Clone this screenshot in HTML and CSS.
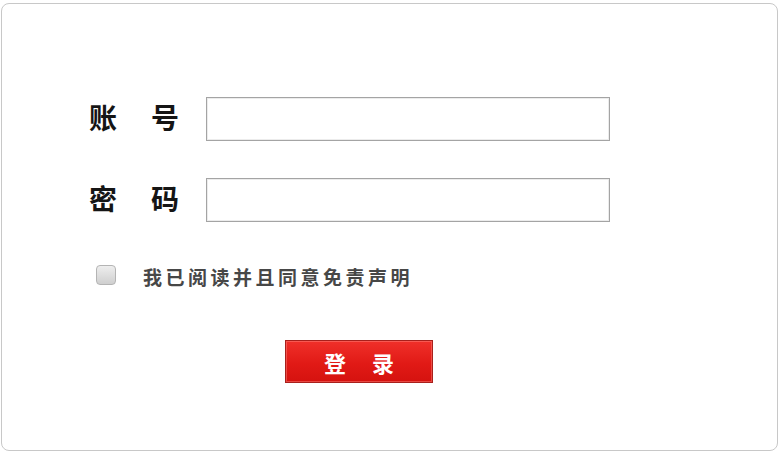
FILE: index.html
```html
<!DOCTYPE html>
<html lang="zh-CN">

<head>
  <meta charset="UTF-8">
  <meta name="viewport" content="width=device-width, initial-scale=1.0">
  <title>登录</title>

  <link rel="stylesheet" href="styles.css">
</head>

<body>

  <div id="panel">

    <div class="row">
      <p class="label"><span>账</span><span>号</span></p>
      <input type="text" class="field">
    </div>

    <div class="row">
      <p class="label"><span>密</span><span>码</span></p>
      <input type="password" class="field">
    </div>

    <div id="agree">
      <input type="checkbox" id="check">
      <label for="check">我已阅读并且同意免责声明</label>
    </div>

    <div id="operation">
      <input type="button" id="login" value="登录">
    </div>

  </div>

</body>

</html>
```

FILE: styles.css
```css
body {
  margin: 0;
  background-color: #ffffff;
  font-family: "Noto Sans CJK SC", "Noto Sans", sans-serif;
}

#panel {
  box-sizing: border-box;
  width: 777px;
  height: 448px;
  margin: 3px 0 0 1px;
  padding: 93px 0 0 87px;
  border: 1px solid #c8c8c8;
  border-radius: 8px;
}

.row {
  display: flex;
  align-items: center;
  height: 44px;
  margin-bottom: 37px;
}

.label {
  display: flex;
  justify-content: space-between;
  width: 90px;
  margin: -4px 27px 0 0;
  font-size: 28px;
  font-weight: bold;
  line-height: 1;
  color: #151515;
}

.field {
  box-sizing: border-box;
  width: 404px;
  height: 44px;
  margin: 0;
  border: 1px solid #a4a4a4;
  box-shadow: inset 0 0 0 1px #ececec;
  background-color: #ffffff;
  outline: none;
}

/* margin-top collapses with the row above */
#agree {
  display: flex;
  align-items: center;
  height: 20px;
  margin: 43px 0 0 7px;
}

#agree input {
  appearance: none;
  box-sizing: border-box;
  width: 20px;
  height: 20px;
  margin: 0 27px 0 0;
  border: 1px solid #b4b4b4;
  border-radius: 4px;
  background: linear-gradient(#eeeeee, #cfcfcf);
}

#agree label {
  font-size: 19px;
  font-weight: bold;
  letter-spacing: 3.5px;
  color: #474747;
  margin-top: 2px;
}

#operation {
  margin: 55px 0 0 196px;
}

#login {
  box-sizing: border-box;
  width: 148px;
  height: 43px;
  padding: 0 0 0 26px;
  border: 1px solid #a8201c;
  box-shadow: inset 0 0 0 1px rgba(255, 140, 130, 0.45);
  background: linear-gradient(#f0302a, #e11a16 55%, #d5120f);
  color: #ffffff;
  font-family: "Noto Sans CJK SC", sans-serif;
  font-size: 22px;
  font-weight: bold;
  letter-spacing: 26px;
}
```
